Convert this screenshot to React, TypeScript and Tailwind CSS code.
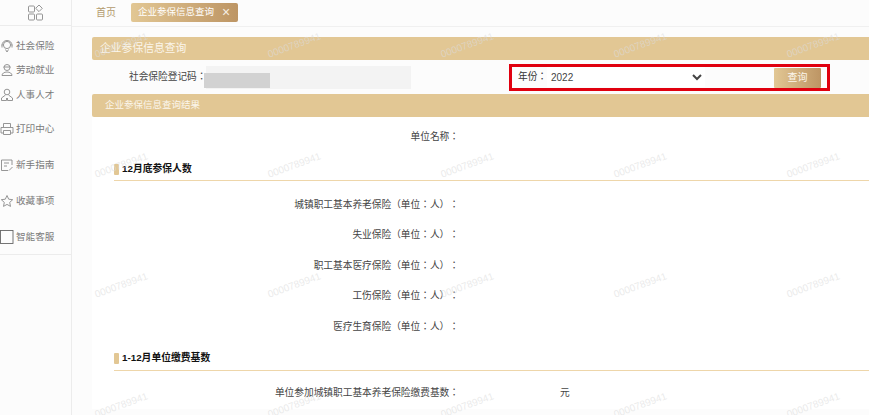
import { ReactNode } from 'react';

const iconProps = {
  width: 14,
  height: 14,
  viewBox: '0 0 14 14',
  fill: 'none',
  stroke: '#8a8a8a',
  strokeWidth: 0.9,
};

const navGroups: { label: string; top: string; icon: ReactNode }[] = [
  {
    label: '社会保险',
    top: 'mt-[13px]',
    icon: (
      <svg {...iconProps}>
        <circle cx="7" cy="6" r="3.6" />
        <path d="M2 6.500c0-3 2-5 5-5s5 2 5 5M2 5.500v3M12 5.500v3M5.500 10.500 7 13l1.500-2.500" />
      </svg>
    ),
  },
  {
    label: '劳动就业',
    top: 'mt-[10px]',
    icon: (
      <svg {...iconProps}>
        <circle cx="7" cy="4.500" r="3" />
        <path d="M3.500 4h7M2 12.500c0-2 2-3.500 5-3.500s5 1.500 5 3.500z" />
      </svg>
    ),
  },
  {
    label: '人事人才',
    top: 'mt-[11px]',
    icon: (
      <svg {...iconProps}>
        <circle cx="7" cy="4" r="2.800" />
        <path d="M5.500 7 1.500 10v2.500h5V10M8.500 7l4 3v2.500h-5V10" />
      </svg>
    ),
  },
  {
    label: '打印中心',
    top: 'mt-[20px]',
    icon: (
      <svg {...iconProps}>
        <path d="M3.500 5V1.500h7V5M3 11H1V5.500h12V11h-2" />
        <path d="M3.500 8.500h7v4h-7z" />
      </svg>
    ),
  },
  {
    label: '新手指南',
    top: 'mt-[22px]',
    icon: (
      <svg {...iconProps}>
        <path d="M12 7V2H1.500v10.500H8" />
        <path d="M4 5h5M4 8h3M9 12.500l3.500-3.500" />
      </svg>
    ),
  },
  {
    label: '收藏事项',
    top: 'mt-[22px]',
    icon: (
      <svg {...iconProps}>
        <path d="m7 1.500 1.700 3.700 4 .5-3 2.700.8 4L7 10.400l-3.500 2 .8-4-3-2.700 4-.5z" />
      </svg>
    ),
  },
  {
    label: '智能客服',
    top: 'mt-[22px]',
    icon: (
      <svg {...iconProps} stroke="#666">
        <rect x="0.500" y="0.500" width="12.500" height="13" />
      </svg>
    ),
  },
];

const watermarkRows = ['top-[33px]', 'top-[153px]', 'top-[273px]', 'top-[393px]'];
const watermarkCols = ['left-[95px]', 'left-[268px]', 'left-[441px]', 'left-[614px]', 'left-[787px]'];

function Row({ label, value }: { label: string; value?: string }) {
  return (
    <div className="flex h-[30.500px] items-center text-[9.700px] text-[#444]">
      <span className="w-[367px] shrink-0 text-right">{label}</span>
      {value && <span className="ml-[101px]">{value}</span>}
    </div>
  );
}

function Heading({ title, className }: { title: string; className: string }) {
  return (
    <div className={`ml-[22px] flex h-[24px] items-center gap-[3px] border-b border-[#eed6aa] pt-[1px] ${className}`}>
      <span className="h-[11px] w-[5px] rounded-[1px] bg-[#e2c794]" />
      <span className="text-[9.800px] font-bold text-[#111]">{title}</span>
    </div>
  );
}

export default function App() {
  return (
    <div className="relative flex h-[415px] w-[869px] overflow-hidden bg-[#fcfcfc] font-['Liberation_Sans','Noto_Sans_CJK_TC',sans-serif] [text-spacing-trim:space-all]">
      <aside className="w-[72px] shrink-0 border-r border-[#ececec]">
        <div className="flex h-[26px] items-center justify-center border-b border-[#ececec]">
          <svg width="15" height="17" viewBox="0 0 15 17" fill="none" stroke="#8a8a8a" strokeWidth="0.900">
            <rect x="0.500" y="2" width="6" height="6" rx="1" />
            <rect x="0.500" y="10" width="6" height="6" rx="1" />
            <rect x="8.500" y="10" width="6" height="6" rx="1" />
            <path d="m11 1 3.300 3.300L11 7.600 7.700 4.300z" />
          </svg>
        </div>
        <nav className="flex flex-col border-b border-[#ececec] pb-[10px]">
          {navGroups.map((item) => (
            <div key={item.label} className={`flex h-[14px] items-center gap-[2px] ${item.top}`}>
              {item.icon}
              <span className="text-[9.600px] whitespace-nowrap text-[#7a7a7a]">{item.label}</span>
            </div>
          ))}
        </nav>
      </aside>

      <main className="min-w-0 flex-1">
        <div className="flex h-[27px] items-center border-b border-[#f0f0f0] pb-[2px]">
          <span className="ml-[24px] text-[10px] text-[#b39a6d]">首页</span>
          <div className="ml-[15px] flex h-[19px] w-[107px] items-center rounded-[2px] bg-gradient-to-r from-[#e2c794] to-[#bd9564] pl-[7px] text-[9.500px] text-white">
            企业参保信息查询
            <span className="ml-[8px] text-[14px] leading-none text-[#f5eee2]">×</span>
          </div>
        </div>

        <div className="pl-[20px] pt-[10px]">
          <div className="flex h-[23px] items-center rounded-l-[2px] bg-[#e2c794] pl-[8px] text-[10.800px] text-[#fbf6ec]">
            企业参保信息查询
          </div>
          <div className="flex h-[34px] items-center">
            <span className="ml-[37px] w-[77px] shrink-0 text-[9.700px] whitespace-nowrap text-[#444]">社会保险登记码：</span>
            <div className="relative h-[23px] w-[205px] shrink-0 bg-[#f3f3f3]">
              <div className="absolute -left-[2px] top-[7px] h-[15px] w-[66px] bg-[#d2d2d2]" />
            </div>
            <div className="ml-[98px] flex h-[27px] w-[321px] shrink-0 items-center border-[3px] border-[#e0000f] pl-[6px]">
              <span className="w-[30px] shrink-0 text-[9.700px] text-[#333]">年份：</span>
              <select
                defaultValue="2022"
                className="-ml-[1px] h-[20px] w-[158px] shrink-0 bg-white text-[10px] text-[#444]"
              >
                <option value="2022">2022</option>
                <option value="2021">2021</option>
              </select>
              <button className="ml-[69px] mt-[1px] h-[20px] w-[47px] shrink-0 rounded-[1px] bg-gradient-to-r from-[#e2c794] to-[#bd9564] text-[10px] text-[#fbf6ec]">
                查询
              </button>
            </div>
          </div>
          <div className="flex h-[23px] items-center rounded-l-[2px] bg-[#e2c794] pl-[13px] text-[9.500px] text-[#fbf6ec]">
            企业参保信息查询结果
          </div>
          <div className="bg-white">
            <div className="flex h-[40px] items-center pt-[1px] text-[9.700px] text-[#444]">
              <span className="w-[367px] text-right">单位名称：</span>
            </div>
            <Heading title="12月底参保人数" className="" />
            <div className="pt-[9px]">
              <Row label="城镇职工基本养老保险（单位：人）：" />
              <Row label="失业保险（单位：人）：" />
              <Row label="职工基本医疗保险（单位：人）：" />
              <Row label="工伤保险（单位：人）：" />
              <Row label="医疗生育保险（单位：人）：" />
            </div>
            <Heading title="1-12月单位缴费基数" className="mt-[4px]" />
            <div className="pt-[8px]">
              <Row label="单位参加城镇职工基本养老保险缴费基数：" value="元" />
            </div>
          </div>
        </div>
      </main>

      {watermarkRows.map((row) =>
        watermarkCols.map((col) => (
          <span
            key={row + col}
            className={`pointer-events-none absolute ${row} ${col} origin-left translate-y-[14px] -rotate-[20deg] text-[10px] text-[#dcdcdc]/60`}
          >
            0000789941
          </span>
        )),
      )}
    </div>
  );
}
